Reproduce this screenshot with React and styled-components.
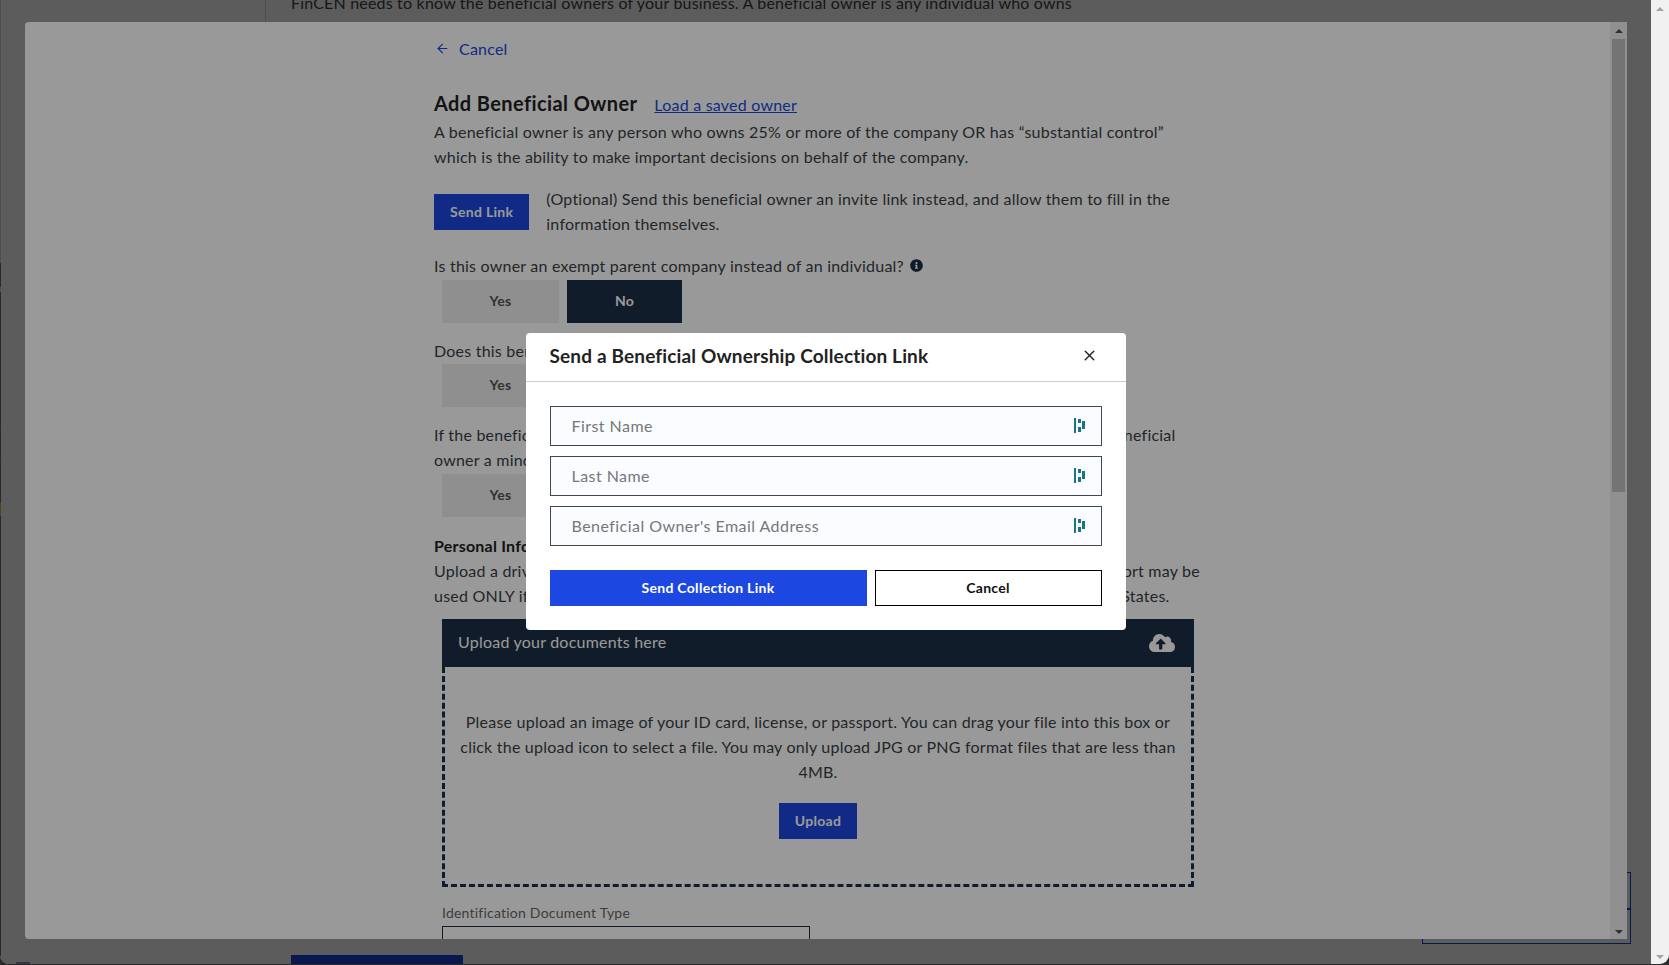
import React from 'react';
import styled, { createGlobalStyle } from 'styled-components';
import { ArrowLeft, X } from 'lucide-react';
import { FaCloudUploadAlt, FaInfoCircle } from 'react-icons/fa';

const GlobalStyle = createGlobalStyle`
  html, body {
    margin: 0;
    height: 100%;
    overflow: hidden;
    background: #2b2b2b;
  }
  * { box-sizing: border-box; }
  body {
    font-family: Lato, "Open Sans", sans-serif;
    font-size: 16px;
    line-height: 25px;
    letter-spacing: 0.22px;
    color: #3a3f45;
  }
`;

const blue = '#1c47e0';
const navy = '#1b2f46';

const Window = styled.div`
  display: flex;
  width: 1669px;
  height: 964px;
  border-radius: 0 0 9px 9px;
  overflow: hidden;
`;

const Page = styled.div`
  position: relative;
  flex: 1;
  overflow: hidden;
  background: #fff;
`;

const BehindText = styled.div`
  margin-left: 291px;
  margin-top: -10px;
  letter-spacing: 0.19px;
  color: #444;
`;

const BehindRule = styled.div`
  position: absolute;
  top: 0;
  left: 265px;
  width: 1px;
  height: 30px;
  background: #ddd;
`;

const BehindButton = styled.div`
  position: absolute;
  left: 291px;
  top: 955px;
  width: 172px;
  height: 12px;
  background: ${blue};
`;

const BehindBox = styled.div`
  position: absolute;
  left: 1422px;
  top: 872px;
  width: 209px;
  height: 72px;
  border: 1px solid ${blue};
  &::after {
    content: '';
    position: absolute;
    right: 0;
    top: 35px;
    width: 4px;
    height: 2px;
    background: ${blue};
  }
`;

const LeftEdge = styled.div`
  position: absolute;
  left: 0;
  top: 0;
  width: 1px;
  height: 100%;
  background: linear-gradient(
    to bottom,
    #d8d8d8 0 263px,
    #777 263px 287px,
    #ddd 287px 292px,
    #777 292px 426px,
    #4a7fd0 426px 432px,
    #777 432px 459px,
    #c86a30 459px 463px,
    #777 463px 503px,
    #f0b93a 503px 516px,
    #777 516px 100%
  );
`;

const PurpleTab = styled.div`
  position: absolute;
  left: 16px;
  bottom: 0;
  width: 14px;
  height: 2px;
  background: #a98be0;
`;

const Backdrop = styled.div`
  position: absolute;
  inset: 0;
  z-index: ${({ $level }) => $level};
  background: rgba(0, 0, 0, 0.4);
`;

const PanelLayer = styled.div`
  position: absolute;
  inset: 0;
  z-index: 2;
  padding: 22px 24px 25px 25px;
`;

const Panel = styled.div`
  display: flex;
  height: 100%;
  background: #fff;
  border-radius: 4px 0 0 4px;
  overflow: hidden;
`;

const Content = styled.div`
  flex: 1;
  padding: 14px 0 0 409px;
  overflow: hidden;
`;

const Column = styled.div`
  width: 770px;
`;

const BackLink = styled.div`
  display: flex;
  align-items: center;
  gap: 9px;
  padding-left: 1px;
  color: ${blue};
`;

const TitleRow = styled.div`
  display: flex;
  align-items: center;
  gap: 17px;
  height: 30px;
  margin-top: 27px;
`;

const Title = styled.h2`
  margin: 0;
  font-size: 20px;
  font-weight: 700;
  letter-spacing: 0.4px;
  color: #222;
`;

const TextLink = styled.span`
  color: ${blue};
  text-decoration: underline;
  margin-top: 2px;
`;

const Text = styled.p`
  margin: ${({ $top }) => $top || 0}px 0 0;
`;

const Strong = styled(Text)`
  font-weight: 700;
  color: #222;
`;

const InviteRow = styled.div`
  display: flex;
  align-items: center;
  gap: 17px;
  margin-top: 17px;
`;

const InviteText = styled.span`
  padding-bottom: 2px;
`;

const SolidButton = styled.button`
  flex: none;
  height: 36px;
  padding: 0 16px 2px;
  border: 0;
  border-radius: 0;
  background: ${blue};
  color: #fff;
  font: 700 14px Lato, sans-serif;
  letter-spacing: 0.3px;
`;

const Question = styled(Text)`
  display: flex;
  align-items: center;
  gap: 6px;
`;

const ToggleRow = styled.div`
  display: grid;
  grid-template-columns: 117px 115px;
  gap: 8px;
  margin: ${({ $top }) => $top || 1}px 0 0 8px;
`;

const Toggle = styled.div`
  display: flex;
  align-items: center;
  justify-content: center;
  height: 43px;
  padding-bottom: 2px;
  font-size: 14px;
  font-weight: 700;
  background: ${({ $active }) => ($active ? navy : '#eee')};
  color: ${({ $active }) => ($active ? '#fff' : '#555')};
`;

const UploadHeader = styled.div`
  display: flex;
  align-items: center;
  justify-content: space-between;
  height: 48px;
  margin: 11px 10px 0 8px;
  padding: 0 19px 0 16px;
  background: ${navy};
  color: #fff;
`;

const UploadLabel = styled.span`
  padding-bottom: 4px;
`;

const DropZone = styled.div`
  display: flex;
  flex-direction: column;
  align-items: center;
  height: 220px;
  margin: 0 10px 0 8px;
  padding: 42px 5px 0;
  border: 3px dashed ${navy};
  border-top: 0;
  text-align: center;
`;

const UploadButton = styled(SolidButton)`
  margin-top: 19px;
`;

const FieldLabel = styled.div`
  margin: 13px 0 0 8px;
  font-size: 14px;
  color: #666;
`;

const SelectBox = styled.div`
  width: 368px;
  height: 40px;
  margin: 1px 0 0 8px;
  border: 1px solid ${navy};
`;

const InnerScrollbar = styled.div`
  position: relative;
  flex: none;
  width: 17px;
  padding: 17px 2px;
  background: #f1f1f1;
`;

const Thumb = styled.div`
  height: 453px;
  background: #c1c1c1;
`;

const Arrow = styled.div`
  position: absolute;
  left: 50%;
  margin-left: -4px;
  width: 0;
  height: 0;
  border-left: 4px solid transparent;
  border-right: 4px solid transparent;
  ${({ $down, $color }) =>
    $down
      ? `bottom: 5px; border-top: 4px solid ${$color};`
      : `top: 7px; border-bottom: 4px solid ${$color};`}
`;

const OuterScrollbar = styled.div`
  position: relative;
  flex: none;
  width: 18px;
  background: #f1f1f1;
`;

const ModalLayer = styled.div`
  position: absolute;
  inset: 0;
  z-index: 4;
  display: flex;
  justify-content: center;
  align-items: flex-start;
  padding-top: 333px;
`;

const Modal = styled.div`
  width: 600px;
  background: #fff;
  border-radius: 4px;
`;

const ModalHeader = styled.div`
  display: flex;
  align-items: center;
  justify-content: space-between;
  height: 49px;
  padding: 0 24px;
  border-bottom: 1px solid #ccc;
`;

const ModalTitle = styled.h3`
  margin: 0 0 3px;
  font-size: 19px;
  font-weight: 700;
  letter-spacing: 0.15px;
  color: #222;
`;

const CloseButton = styled.button`
  display: flex;
  padding: 0;
  margin: -3px 4px 0 0;
  border: 0;
  background: none;
  color: #222;
`;

const ModalBody = styled.div`
  display: flex;
  flex-direction: column;
  gap: 10px;
  padding: 24px;
`;

const Field = styled.div`
  display: flex;
  align-items: center;
  justify-content: space-between;
  height: 40px;
  padding: 0 16px 2px 21px;
  border: 1px solid #3f4a50;
  background: #fafcff;
  color: #777;
  letter-spacing: 0.45px;
`;

const ModalActions = styled.div`
  display: grid;
  grid-template-columns: 317px 1fr;
  gap: 8px;
  margin-top: 14px;
`;

const CancelButton = styled.button`
  height: 36px;
  padding: 0 0 2px;
  border: 1px solid #000;
  background: #fff;
  color: #111;
  font: 700 14px Lato, sans-serif;
  letter-spacing: 0.3px;
`;

const FieldIcon = () => (
  <svg width="11" height="15" viewBox="0 0 11 15" fill="#177586">
    <rect x="0" y="0" width="2" height="15" />
    <rect x="4" y="1" width="3" height="4" />
    <rect x="4" y="9" width="3" height="5" />
    <rect x="8" y="3" width="3" height="8" />
  </svg>
);

export default function App() {
  return (
    <Window>
      <GlobalStyle />
      <Page>
        <BehindText>FinCEN needs to know the beneficial owners of your business. A beneficial owner is any individual who owns</BehindText>
        <BehindRule />
        <BehindButton />
        <BehindBox />
        <LeftEdge />
        <PurpleTab />
        <Backdrop $level={1} />
        <PanelLayer>
          <Panel>
            <Content>
              <Column>
                <BackLink>
                  <ArrowLeft size={15} strokeWidth={1.75} />
                  Cancel
                </BackLink>
                <TitleRow>
                  <Title>Add Beneficial Owner</Title>
                  <TextLink>Load a saved owner</TextLink>
                </TitleRow>
                <Text $top={1}>
                  A beneficial owner is any person who owns 25% or more of the company OR has “substantial control”
                  <br />
                  which is the ability to make important decisions on behalf of the company.
                </Text>
                <InviteRow>
                  <SolidButton>Send Link</SolidButton>
                  <InviteText>
                    (Optional) Send this beneficial owner an invite link instead, and allow them to fill in the
                    <br />
                    information themselves.
                  </InviteText>
                </InviteRow>
                <Question $top={15}>
                  Is this owner an exempt parent company instead of an individual?
                  <FaInfoCircle size={13} color="#1b2f46" />
                </Question>
                <ToggleRow $top={2}>
                  <Toggle>Yes</Toggle>
                  <Toggle $active>No</Toggle>
                </ToggleRow>
                <Text $top={15}>Does this beneficial owner have a FinCEN ID number?</Text>
                <ToggleRow>
                  <Toggle>Yes</Toggle>
                  <Toggle $active>No</Toggle>
                </ToggleRow>
                <Text $top={15}>
                  If the beneficial owner is a minor child, a parent or a legal guardian may report instead. Is this beneficial
                  <br />
                  owner a minor child?
                </Text>
                <ToggleRow $top={2}>
                  <Toggle>Yes</Toggle>
                  <Toggle $active>No</Toggle>
                </ToggleRow>
                <Strong $top={16}>Personal Information</Strong>
                <Text>
                  Upload a driver's license, state ID, or other valid government-issued documents. A foreign passport may be
                  <br />
                  used ONLY if the beneficial owner does not have any other form of ID issued within the United States.
                </Text>
                <UploadHeader>
                  <UploadLabel>Upload your documents here</UploadLabel>
                  <FaCloudUploadAlt size={26} color="#fff" />
                </UploadHeader>
                <DropZone>
                  <span>
                    Please upload an image of your ID card, license, or passport. You can drag your file into this box or
                    <br />
                    click the upload icon to select a file. You may only upload JPG or PNG format files that are less than
                    <br />
                    4MB.
                  </span>
                  <UploadButton>Upload</UploadButton>
                </DropZone>
                <FieldLabel>Identification Document Type</FieldLabel>
                <SelectBox />
              </Column>
            </Content>
            <InnerScrollbar>
              <Arrow $color="#505050" />
              <Thumb />
              <Arrow $down $color="#505050" />
            </InnerScrollbar>
          </Panel>
        </PanelLayer>
        <Backdrop $level={3} />
        <ModalLayer>
          <Modal>
            <ModalHeader>
              <ModalTitle>Send a Beneficial Ownership Collection Link</ModalTitle>
              <CloseButton>
                <X size={17} strokeWidth={2} />
              </CloseButton>
            </ModalHeader>
            <ModalBody>
              <Field>First Name<FieldIcon /></Field>
              <Field>Last Name<FieldIcon /></Field>
              <Field>Beneficial Owner's Email Address<FieldIcon /></Field>
              <ModalActions>
                <SolidButton>Send Collection Link</SolidButton>
                <CancelButton>Cancel</CancelButton>
              </ModalActions>
            </ModalBody>
          </Modal>
        </ModalLayer>
      </Page>
      <OuterScrollbar>
        <Arrow $color="#a3a3a3" />
        <Arrow $down $color="#a3a3a3" />
      </OuterScrollbar>
    </Window>
  );
}
